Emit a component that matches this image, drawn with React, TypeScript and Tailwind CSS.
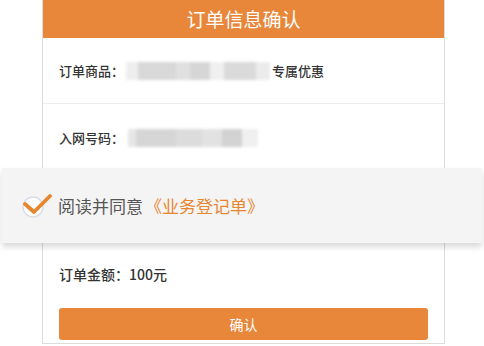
import React from 'react';

const font = { fontFamily: '"Noto Sans CJK SC", "Noto Sans", sans-serif' };

const Blur: React.FC<{ parts: { w: number; c: string }[] }> = ({ parts }) => (
  <div className="flex h-[18px] items-stretch blur-[1.5px]">
    {parts.map((p, i) => (
      <div key={i} style={{ width: p.w, backgroundColor: p.c }} />
    ))}
  </div>
);

const CheckIcon: React.FC = () => (
  <svg width="30" height="26" viewBox="0 0 30 26" className="shrink-0">
    <circle cx="11" cy="14" r="10" fill="#ffffff" stroke="#d9dde6" strokeWidth="1.5" />
    <path d="M3 11 L12 19 L28 3" fill="none" stroke="#e8862f" strokeWidth="3.8" strokeLinecap="round" strokeLinejoin="round" />
  </svg>
);

export default function App() {
  return (
    <div className="relative h-[346px] w-[484px] overflow-hidden bg-white" style={font}>
      <div className="ml-[42px] flex w-[403px] flex-col border-x border-b border-[#dcdcdc]">
        {/* header */}
        <div className="flex h-[38px] items-center justify-center bg-[#e8863a] text-[19px] text-white">
          订单信息确认
        </div>

        {/* product */}
        <div className="flex h-[66px] items-center border-b border-[#ececec] pl-[16px] text-[13px] font-medium text-[#333]">
          <span>订单商品：</span>
          <div className="ml-[2px] mr-[2px]">
            <Blur
              parts={[
                { w: 12, c: '#eeeeee' },
                { w: 38, c: '#d8d8d8' },
                { w: 14, c: '#e0e0e0' },
                { w: 20, c: '#d6d6d6' },
                { w: 14, c: '#f0f0f0' },
                { w: 32, c: '#dadada' },
                { w: 14, c: '#ececec' },
              ]}
            />
          </div>
          <span>专属优惠</span>
        </div>

        {/* number */}
        <div className="flex h-[68px] items-center pl-[16px] text-[13px] font-medium text-[#333]">
          <span>入网号码：</span>
          <div className="ml-[4px]">
            <Blur
              parts={[
                { w: 8, c: '#e6e6e6' },
                { w: 40, c: '#d6d6d6' },
                { w: 26, c: '#dcdcdc' },
                { w: 20, c: '#e2e2e2' },
                { w: 20, c: '#d2d2d2' },
                { w: 16, c: '#f0f0f0' },
              ]}
            />
          </div>
        </div>

        {/* amount */}
        <div className="pl-[16px] pt-[92px] text-[14px] font-medium leading-[20px] text-[#333]">订单金额：100元</div>

        <div className="px-[16px] pb-[3px] pt-[24px]">
          <div className="flex h-[32px] items-center justify-center rounded-[3px] bg-[#e8863a] text-[14px] text-white">
            确认
          </div>
        </div>
      </div>

      {/* agreement overlay */}
      <div className="absolute left-[2px] right-[2px] top-[168px] flex h-[75px] items-center bg-[#f4f4f4] pl-[20px] shadow-[0_4px_6px_rgba(0,0,0,0.15)]">
        <CheckIcon />
        <span className="ml-[6px] text-[17px] text-[#555]">阅读并同意</span>
        <span className="ml-[2px] text-[17px] text-[#e8862f]">《业务登记单》</span>
      </div>
    </div>
  );
}
